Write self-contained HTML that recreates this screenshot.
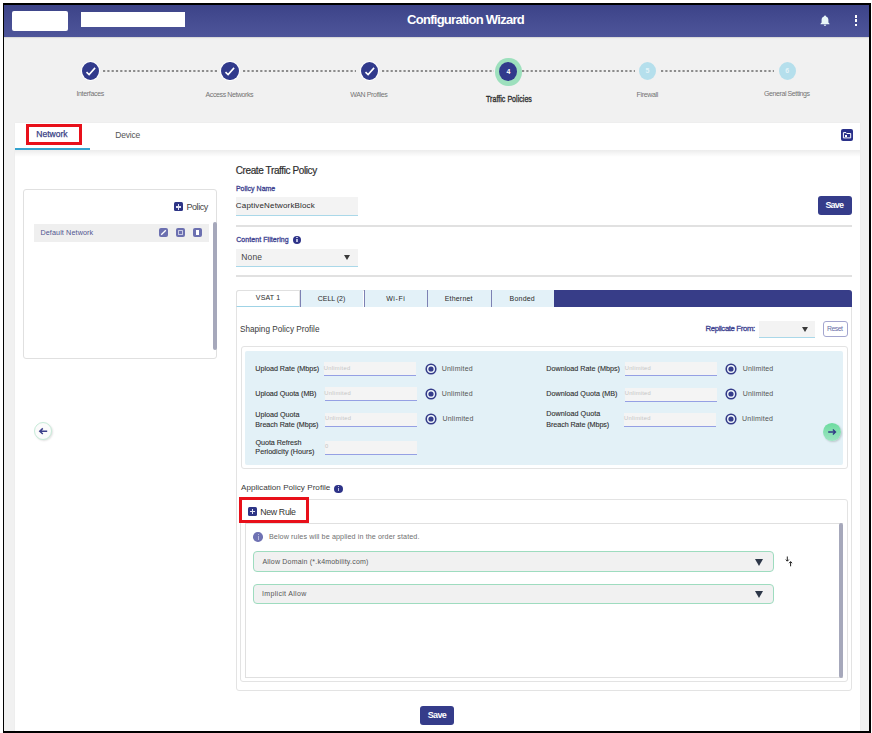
<!DOCTYPE html>
<html><head><meta charset="utf-8">
<style>
*{box-sizing:border-box;margin:0;padding:0}
html,body{width:872px;height:733px;overflow:hidden;background:#fff;font-family:"Liberation Sans",sans-serif}
#frame{position:absolute;left:3px;top:3px;width:868px;height:730px;border:2px solid #000;border-left-width:1px;background:#f1f1f1;overflow:hidden}
#pg{position:absolute;left:-4px;top:-5px;width:872px;height:733px}
.a{position:absolute}
.t{position:absolute;white-space:nowrap;line-height:1}
#hdr{position:absolute;left:0;top:0;width:872px;height:36.6px;background:linear-gradient(#3a4186,#4e559a);box-shadow:0 0.5px 1.5px rgba(0,0,0,.25)}
.wbox{position:absolute;background:#fff}
.step{position:absolute;width:17.5px;height:18.5px;border-radius:50%;background:#313a8c;box-shadow:0 0 0 1px #fff}
.dash{position:absolute;height:2px;top:70px;background:repeating-linear-gradient(90deg,#8c8c8c 0 2.3px,transparent 2.3px 4.3px)}
.sl{color:#747474}
.nv{color:#3d4290;-webkit-text-stroke:0.3px #3d4290}
.hr{position:absolute;height:2px;background:#e1e1e1}
.inp{position:absolute;background:#f3f3f3;border-bottom:1.8px solid #aad8e9}
.btn{position:absolute;background:#353c8a;border-radius:3px}
.info{position:absolute;width:8.4px;height:8.4px;border-radius:50%;background:#2e3388}
.info:before{content:"";position:absolute;left:3.65px;top:1.6px;width:1.1px;height:1.1px;background:#b9bce0}.info:after{content:"";position:absolute;left:3.65px;top:3.3px;width:1.1px;height:3.4px;background:#b9bce0}
.tab{position:absolute;top:289.5px;height:17.7px;background:#e3f1f8;border-left:1px solid #7d81b3}
.tt{color:#2a2a2a}
.lab{color:#2e2e2e;-webkit-text-stroke:0.1px #2e2e2e}
.sinp{position:absolute;width:92px;height:14px;background:#f4f4f4;border-bottom:1.3px solid #95a0e4}
.ph{color:#c4c4c4}
.radio{position:absolute;width:11.2px;height:11.2px;border-radius:50%;border:1.7px solid #353c8a;background:#eef6fa}
.radio:after{content:"";position:absolute;left:1.3px;top:1.3px;width:5.2px;height:5.2px;border-radius:50%;background:#353c8a}
.ul{color:#555}
.rule{position:absolute;left:253.2px;width:520.8px;background:#f1f1f1;border:1.4px solid #9edcbf;border-radius:4px}
.tri{position:absolute;width:0;height:0;border-left:4.1px solid transparent;border-right:4.1px solid transparent;border-top:7.3px solid #2d3748}
.tris{position:absolute;width:0;height:0;border-left:3.9px solid transparent;border-right:3.9px solid transparent;border-top:5.4px solid #3a3a3a}
.ico{position:absolute;width:9px;height:9px;border-radius:2px;background:#6c70b0}
</style></head>
<body>
<div id="frame"><div id="pg">
  <!-- HEADER -->
  <div id="hdr"></div>
  <div class="wbox" style="left:12px;top:10.6px;width:56px;height:20.2px;border-radius:2px"></div>
  <div class="wbox" style="left:81px;top:12px;width:104px;height:15.2px"></div>
  <div id="title" class="t" style="left:407.00px;top:12.86px;font-size:13.0px;letter-spacing:-0.713px;font-weight:bold;color:#fff">Configuration Wizard</div>
  <svg class="a" style="left:819.5px;top:15px" width="10" height="11" viewBox="0 0 10 11"><path d="M5 0.6c0.6 0 1 0.4 1 0.9 1.6 0.4 2.4 1.7 2.4 3.3v2.6l1.1 1.4v0.5H0.5V8.8l1.1-1.4V4.8c0-1.6 0.8-2.9 2.4-3.3 0-0.5 0.4-0.9 1-0.9zM3.8 9.7h2.4c0 0.7-0.5 1.2-1.2 1.2S3.8 10.4 3.8 9.7z" fill="#e8f6f8"/></svg>
  <div class="a" style="left:854.8px;top:15px;width:2.6px;height:2.5px;background:#fff"></div>
  <div class="a" style="left:854.8px;top:19.4px;width:2.6px;height:2.5px;background:#fff"></div>
  <div class="a" style="left:854.8px;top:23.9px;width:2.6px;height:2.5px;background:#fff"></div>

  <!-- STEPPER -->
  <svg class="a" style="left:103.0px;top:70px" width="114.0" height="2"><line x1="0" y1="1" x2="114.0" y2="1" stroke="#8c8c8c" stroke-width="2" stroke-dasharray="2.2 2.1"/></svg>
  <svg class="a" style="left:243.0px;top:70px" width="113.0" height="2"><line x1="0" y1="1" x2="113.0" y2="1" stroke="#8c8c8c" stroke-width="2" stroke-dasharray="2.2 2.1"/></svg>
  <svg class="a" style="left:382.0px;top:70px" width="112.0" height="2"><line x1="0" y1="1" x2="112.0" y2="1" stroke="#8c8c8c" stroke-width="2" stroke-dasharray="2.2 2.1"/></svg>
  <svg class="a" style="left:522.0px;top:70px" width="113.0" height="2"><line x1="0" y1="1" x2="113.0" y2="1" stroke="#8c8c8c" stroke-width="2" stroke-dasharray="2.2 2.1"/></svg>
  <svg class="a" style="left:661.0px;top:70px" width="113.0" height="2"><line x1="0" y1="1" x2="113.0" y2="1" stroke="#8c8c8c" stroke-width="2" stroke-dasharray="2.2 2.1"/></svg>
  <div class="step" style="left:81.5px;top:61.8px"></div>
  <div class="step" style="left:221.2px;top:61.8px"></div>
  <div class="step" style="left:360.5px;top:61.8px"></div>
  <svg class="a" style="left:81.5px;top:61.8px" width="18" height="19"><path d="M4.5 10.1l2.6 2.4 6-6.6" stroke="#fff" stroke-width="1.6" fill="none"/></svg>
  <svg class="a" style="left:221.2px;top:61.8px" width="18" height="19"><path d="M4.5 10.1l2.6 2.4 6-6.6" stroke="#fff" stroke-width="1.6" fill="none"/></svg>
  <svg class="a" style="left:360.5px;top:61.8px" width="18" height="19"><path d="M4.5 10.1l2.6 2.4 6-6.6" stroke="#fff" stroke-width="1.6" fill="none"/></svg>
  <div class="a" style="left:495.2px;top:57.6px;width:26.4px;height:28.4px;border-radius:50%;background:#9de0bd"></div>
  <div class="a" style="left:499.4px;top:62.3px;width:18px;height:19px;border-radius:50%;background:#313a8c;color:#fff;font-size:7px;font-weight:bold;text-align:center;line-height:19px">4</div>
  <div class="a" style="left:638.8px;top:61.8px;width:17.5px;height:18.5px;border-radius:50%;background:#b5dfec;color:#e4f3f8;font-size:7px;font-weight:bold;text-align:center;line-height:18.5px">5</div>
  <div class="a" style="left:778.5px;top:61.8px;width:17.5px;height:18.5px;border-radius:50%;background:#b5dfec;color:#e4f3f8;font-size:7px;font-weight:bold;text-align:center;line-height:18.5px">6</div>
  <div id="s1" class="t sl" style="left:76.44px;top:90.27px;font-size:7.0px;letter-spacing:-0.332px">Interfaces</div>
  <div id="s2" class="t sl" style="left:205.62px;top:90.99px;font-size:7.0px;letter-spacing:-0.406px">Access Networks</div>
  <div id="s3" class="t sl" style="left:350.14px;top:90.71px;font-size:7.0px;letter-spacing:-0.344px">WAN Profiles</div>
  <div id="s4" class="t" style="left:485.84px;top:94.94px;font-size:8.8px;letter-spacing:0.042px;color:#2e2e2e;-webkit-text-stroke:0.35px #2e2e2e;transform:scaleX(0.8);transform-origin:0 0">Traffic Policies</div>
  <div id="s5" class="t sl" style="left:636.57px;top:90.61px;font-size:7.0px;letter-spacing:-0.336px">Firewall</div>
  <div id="s6" class="t sl" style="left:763.94px;top:90.04px;font-size:7.0px;letter-spacing:-0.401px">General Settings</div>

  <!-- CARD -->
  <div class="a" style="left:14.6px;top:123.1px;width:845.9px;height:620px;background:#fff;box-shadow:0 0 1.5px rgba(0,0,0,.06)"></div>
  <div class="a" style="left:14.6px;top:150px;width:845.9px;height:7px;background:linear-gradient(rgba(0,0,0,.075),rgba(0,0,0,0))"></div>
  <div class="a" style="left:14.6px;top:148px;width:75.6px;height:2px;background:#34a3cf"></div>
  <div id="net" class="t" style="left:36.37px;top:130.39px;font-size:8.5px;letter-spacing:0.003px;color:#3a3f85;-webkit-text-stroke:0.25px #3a3f85">Network</div>
  <div class="a" style="left:26px;top:124px;width:55.8px;height:20.7px;border:3.1px solid #e8101a"></div>
  <div id="dev" class="t" style="left:115.27px;top:130.64px;font-size:8.5px;letter-spacing:-0.184px;color:#555">Device</div>
  <div class="a" style="left:841.2px;top:129.2px;width:11.7px;height:12.3px;border-radius:2px;background:#2a318a"></div>
  <svg class="a" style="left:841.2px;top:129.2px" width="12" height="13"><path d="M2.4 3.6h2.6l0.8 0.9h3.9v4.4H2.4z" fill="none" stroke="#fff" stroke-width="1"/><rect x="4" y="6" width="2" height="2" fill="#fff"/></svg>

  <!-- LEFT PANEL -->
  <div class="a" style="left:23px;top:189px;width:194px;height:170.4px;border:1px solid #e0e0e0;border-radius:3px"></div>
  <div class="a" style="left:173.8px;top:202.2px;width:9.1px;height:9.3px;border-radius:1.5px;background:#2e3586"></div>
  <div class="a" style="left:177.8px;top:204.4px;width:1.15px;height:5.2px;background:#e4e5f4"></div>
  <div class="a" style="left:175.8px;top:206.4px;width:5.2px;height:1.15px;background:#e4e5f4"></div>
  <div id="pol" class="t" style="left:186.55px;top:203.0px;font-size:9.0px;letter-spacing:-0.469px;color:#444">Policy</div>
  <div class="a" style="left:34px;top:223.6px;width:175px;height:18.3px;background:#efefef"></div>
  <div id="dn" class="t" style="left:40.40px;top:228.9px;font-size:7.2px;letter-spacing:0.118px;color:#50558f">Default Network</div>
  <div class="ico" style="left:158.7px;top:228.1px"></div>
  <svg class="a" style="left:158.7px;top:228.1px" width="9" height="9"><path d="M2.2 6.8L6.8 2.2" stroke="#fff" stroke-width="1.3"/></svg>
  <div class="ico" style="left:176.1px;top:228.1px"></div>
  <div class="a" style="left:178.4px;top:230.2px;width:4.4px;height:4.8px;border:1px solid #c9cbe4;border-radius:.5px"></div>
  <div class="ico" style="left:193.3px;top:228.1px"></div>
  <div class="a" style="left:196.1px;top:230.4px;width:3.4px;height:4.6px;background:#fff"></div>
  <div class="a" style="left:212.6px;top:222.2px;width:4.2px;height:127.5px;border-radius:2px;background:#a6a8bb"></div>

  <!-- left arrow -->
  <div class="a" style="left:33.6px;top:422.2px;width:18.3px;height:18.3px;border-radius:50%;background:#fbfbfb;border:1.2px solid #c7ecd9;box-shadow:1px 1px 2px rgba(0,0,0,.12)"></div>
  <svg class="a" style="left:33.6px;top:422.2px" width="19" height="19"><path d="M13.2 9.2H6.2M8.8 6.4L5.8 9.2l3 2.8" stroke="#3b3f8a" stroke-width="1.5" fill="none"/></svg>

  <!-- MAIN FORM -->
  <div id="ctp" class="t" style="left:235.78px;top:165.63px;font-size:10.0px;letter-spacing:-0.395px;color:#2e2e2e;-webkit-text-stroke:0.2px #2e2e2e">Create Traffic Policy</div>
  <div id="pn" class="t nv" style="left:235.89px;top:184.76px;font-size:7.0px;letter-spacing:0.010px">Policy Name</div>
  <div class="inp" style="left:236px;top:197.4px;width:122px;height:18.6px"></div>
  <div id="cnb" class="t" style="left:235.87px;top:202.15px;font-size:8.0px;letter-spacing:0.160px;color:#2a2a2a">CaptiveNetworkBlock</div>
  <div class="btn" style="left:817.8px;top:196px;width:34.2px;height:18.9px"></div>
  <div id="save1" class="t" style="left:825.39px;top:201.15px;font-size:9.0px;letter-spacing:-0.758px;color:#fff;font-weight:bold">Save</div>
  <div class="hr" style="left:236px;top:224.9px;width:616px"></div>
  <div id="cf" class="t nv" style="left:236.15px;top:236.30px;font-size:7.0px;letter-spacing:0.076px">Content Filtering</div>
  <div class="info" style="left:292.8px;top:235.7px"></div>
  <div class="inp" style="left:236.2px;top:248.5px;width:121.8px;height:18.4px"></div>
  <div id="none" class="t" style="left:241.29px;top:252.85px;font-size:8.5px;letter-spacing:0.128px;color:#444">None</div>
  <div class="tris" style="left:343.6px;top:255px"></div>
  <div class="hr" style="left:236px;top:275.2px;width:616px"></div>

  <!-- TAB CONTAINER -->
  <div class="a" style="left:236.4px;top:289.5px;width:615.3px;height:401.3px;border:1px solid #e3e3e3;border-radius:3px"></div>
  <div class="a" style="left:553.8px;top:289.8px;width:298px;height:17.3px;background:#373d88;border-radius:0 3px 0 0"></div>
  <div class="tab" style="left:300.2px;width:63.3px"></div>
  <div class="tab" style="left:363.5px;width:63.3px"></div>
  <div class="tab" style="left:426.8px;width:64px"></div>
  <div class="tab" style="left:490.8px;width:63px"></div>
  <div class="a" style="left:236.4px;top:289.5px;width:63.8px;height:17.8px;background:#fff;border:1px solid #e0e0e0;border-bottom:1.5px solid #9fd3e6;border-radius:3px 0 0 0"></div>
  <div id="vsat" class="t tt" style="left:255.80px;top:294.41px;font-size:7.0px;letter-spacing:0.165px">VSAT 1</div>
  <div id="cell" class="t tt" style="left:317.80px;top:294.57px;font-size:7.0px;letter-spacing:-0.042px">CELL (2)</div>
  <div id="wifi" class="t tt" style="left:386.16px;top:294.87px;font-size:7.0px;letter-spacing:0.580px">Wi-Fi</div>
  <div id="eth" class="t tt" style="left:444.71px;top:294.73px;font-size:7.0px;letter-spacing:0.191px">Ethernet</div>
  <div id="bond" class="t tt" style="left:509.57px;top:294.78px;font-size:7.0px;letter-spacing:0.211px">Bonded</div>

  <div id="spp" class="t" style="left:239.96px;top:326.28px;font-size:8.2px;letter-spacing:-0.008px;color:#3a3a3a">Shaping Policy Profile</div>
  <div id="rf" class="t nv" style="left:705.49px;top:324.62px;font-size:7.8px;letter-spacing:-0.379px">Replicate From:</div>
  <div class="inp" style="left:759.3px;top:320.7px;width:55.5px;height:17.3px"></div>
  <div class="tris" style="left:801.8px;top:326.8px"></div>
  <div class="a" style="left:822.5px;top:321.4px;width:25.4px;height:15.5px;border:1.2px solid #a4a6cf;border-radius:3px"></div>
  <div id="reset" class="t" style="left:827.09px;top:325.86px;font-size:6.9px;letter-spacing:-0.520px;color:#6a6fa8">Reset</div>

  <div class="a" style="left:240.7px;top:346.3px;width:606.9px;height:122.3px;border:1px solid #e3e3e3;border-radius:3px"></div>
  <div class="a" style="left:245.3px;top:350.9px;width:598.1px;height:114px;background:#e3f1f7;border-radius:2px"></div>

  <div id="l1" class="t lab" style="left:255.26px;top:364.53px;font-size:7.2px;letter-spacing:-0.026px">Upload Rate (Mbps)</div>
  <div id="l2" class="t lab" style="left:255.26px;top:390.21px;font-size:7.2px;letter-spacing:-0.044px">Upload Quota (MB)</div>
  <div id="l3" class="t lab" style="left:255.26px;top:410.76px;font-size:7.2px;letter-spacing:-0.010px">Upload Quota</div>
  <div id="l4" class="t lab" style="left:255.36px;top:420.85px;font-size:7.2px;letter-spacing:-0.068px">Breach Rate (Mbps)</div>
  <div id="l5" class="t lab" style="left:255.55px;top:438.91px;font-size:7.2px;letter-spacing:-0.066px">Quota Refresh</div>
  <div id="l6" class="t lab" style="left:255.36px;top:448.30px;font-size:7.2px;letter-spacing:-0.003px">Periodicity (Hours)</div>
  <div class="sinp" style="left:324px;top:362px"></div>
  <div class="sinp" style="left:324.5px;top:387.2px"></div>
  <div class="sinp" style="left:325px;top:412.8px"></div>
  <div class="sinp" style="left:325px;top:440.5px"></div>
  <div id="p1" class="t ph" style="left:323.69px;top:366.06px;font-size:5.8px;letter-spacing:0.283px">Unlimited</div>
  <div id="p2" class="t ph" style="left:324.27px;top:390.69px;font-size:5.8px;letter-spacing:0.285px">Unlimited</div>
  <div id="p3" class="t ph" style="left:324.96px;top:416.25px;font-size:5.8px;letter-spacing:0.239px">Unlimited</div>
  <div id="p4" class="t ph" style="left:324.90px;top:444.32px;font-size:5.8px;letter-spacing:0.066px">0</div>
  <svg class="a" style="left:424.80px;top:362.80px" width="12" height="12" viewBox="0 0 12 12"><circle cx="6" cy="6" r="4.8" fill="#f0f7fb" stroke="#353c8a" stroke-width="1.6"/><circle cx="6" cy="6" r="2.6" fill="#353c8a"/></svg>
  <svg class="a" style="left:425.00px;top:388.10px" width="12" height="12" viewBox="0 0 12 12"><circle cx="6" cy="6" r="4.8" fill="#f0f7fb" stroke="#353c8a" stroke-width="1.6"/><circle cx="6" cy="6" r="2.6" fill="#353c8a"/></svg>
  <svg class="a" style="left:425.40px;top:413.30px" width="12" height="12" viewBox="0 0 12 12"><circle cx="6" cy="6" r="4.8" fill="#f0f7fb" stroke="#353c8a" stroke-width="1.6"/><circle cx="6" cy="6" r="2.6" fill="#353c8a"/></svg>
  <div id="u1" class="t ul" style="left:441.69px;top:365.0px;font-size:7.0px;letter-spacing:0.228px">Unlimited</div>
  <div id="u2" class="t ul" style="left:441.64px;top:389.71px;font-size:7.0px;letter-spacing:0.228px">Unlimited</div>
  <div id="u3" class="t ul" style="left:442.48px;top:415.00px;font-size:7.0px;letter-spacing:0.212px">Unlimited</div>

  <div id="d1" class="t lab" style="left:546.27px;top:365.18px;font-size:7.2px;letter-spacing:0.013px">Download Rate (Mbps)</div>
  <div id="d2" class="t lab" style="left:546.27px;top:390.12px;font-size:7.2px;letter-spacing:0.007px">Download Quota (MB)</div>
  <div id="d3" class="t lab" style="left:546.29px;top:410.32px;font-size:7.2px;letter-spacing:0.034px">Download Quota</div>
  <div id="d4" class="t lab" style="left:546.27px;top:420.82px;font-size:7.2px;letter-spacing:-0.078px">Breach Rate (Mbps)</div>
  <div class="sinp" style="left:624.7px;top:362px"></div>
  <div class="sinp" style="left:624.7px;top:387.5px"></div>
  <div class="sinp" style="left:624.3px;top:412.8px"></div>
  <div id="p5" class="t ph" style="left:624.73px;top:365.59px;font-size:5.8px;letter-spacing:0.237px">Unlimited</div>
  <div id="p6" class="t ph" style="left:624.73px;top:391.33px;font-size:5.8px;letter-spacing:0.237px">Unlimited</div>
  <div id="p7" class="t ph" style="left:624.08px;top:416.29px;font-size:5.8px;letter-spacing:0.274px">Unlimited</div>
  <svg class="a" style="left:725.40px;top:362.80px" width="12" height="12" viewBox="0 0 12 12"><circle cx="6" cy="6" r="4.8" fill="#f0f7fb" stroke="#353c8a" stroke-width="1.6"/><circle cx="6" cy="6" r="2.6" fill="#353c8a"/></svg>
  <svg class="a" style="left:725.40px;top:388.10px" width="12" height="12" viewBox="0 0 12 12"><circle cx="6" cy="6" r="4.8" fill="#f0f7fb" stroke="#353c8a" stroke-width="1.6"/><circle cx="6" cy="6" r="2.6" fill="#353c8a"/></svg>
  <svg class="a" style="left:725.10px;top:413.30px" width="12" height="12" viewBox="0 0 12 12"><circle cx="6" cy="6" r="4.8" fill="#f0f7fb" stroke="#353c8a" stroke-width="1.6"/><circle cx="6" cy="6" r="2.6" fill="#353c8a"/></svg>
  <div id="u4" class="t ul" style="left:742.68px;top:365.1px;font-size:7.0px;letter-spacing:0.170px">Unlimited</div>
  <div id="u5" class="t ul" style="left:742.68px;top:389.66px;font-size:7.0px;letter-spacing:0.170px">Unlimited</div>
  <div id="u6" class="t ul" style="left:742.05px;top:414.91px;font-size:7.0px;letter-spacing:0.216px">Unlimited</div>

  <div class="a" style="left:822.9px;top:422.5px;width:18.1px;height:18px;border-radius:50%;background:linear-gradient(#6cdc9f,#9fe4c3);box-shadow:1px 1px 2px rgba(0,0,0,.18)"></div>
  <svg class="a" style="left:822.9px;top:422.5px" width="19" height="18"><path d="M5.2 9h7.4M9.9 6.5l2.6 2.5-2.6 2.5" stroke="#333a86" stroke-width="1.35" fill="none"/></svg>

  <!-- APPLICATION POLICY -->
  <div id="app" class="t" style="left:240.97px;top:483.57px;font-size:8.1px;letter-spacing:0.029px;color:#3a3a3a">Application Policy Profile</div>
  <div class="info" style="left:334.4px;top:484.5px"></div>
  <div class="a" style="left:240.3px;top:498.8px;width:607.3px;height:183.5px;border:1px solid #e3e3e3;border-radius:3px"></div>
  <div class="a" style="left:245.3px;top:523px;width:597.7px;height:154.9px;border:1px solid #e0e0e0;border-right:none"></div>
  <div class="a" style="left:838.8px;top:523px;width:4.2px;height:154.5px;border-radius:2px;background:#a6a8bb"></div>
  <div class="a" style="left:247.7px;top:506.8px;width:9.1px;height:9px;border-radius:1.5px;background:#2e3586"></div>
  <div class="a" style="left:251.7px;top:508.9px;width:1.15px;height:5.1px;background:#e4e5f4"></div>
  <div class="a" style="left:249.7px;top:510.9px;width:5.1px;height:1.15px;background:#e4e5f4"></div>
  <div id="nr" class="t" style="left:260.19px;top:507.61px;font-size:8.8px;letter-spacing:-0.341px;color:#333">New Rule</div>
  <div class="a" style="left:239.3px;top:497.1px;width:69.8px;height:25.5px;border:3.2px solid #e8101a"></div>

  <div class="a" style="left:253.4px;top:532.1px;width:9.5px;height:9.5px;border-radius:50%;background:#6f72b3"></div><div class="a" style="left:257.55px;top:534.2px;width:1.2px;height:1.2px;background:#b4b6dc"></div><div class="a" style="left:257.55px;top:536.1px;width:1.2px;height:3.6px;background:#b4b6dc"></div>
  <div id="below" class="t" style="left:268.94px;top:533.03px;font-size:7.2px;letter-spacing:0.091px;color:#707070">Below rules will be applied in the order stated.</div>
  <div class="rule" style="top:551px;height:20.6px"></div>
  <div id="ad" class="t" style="left:262.49px;top:557.72px;font-size:7.0px;letter-spacing:0.201px;color:#555">Allow Domain (*.k4mobility.com)</div>
  <div class="tri" style="left:755.3px;top:558.6px"></div>
  <div class="rule" style="top:584.3px;height:19.6px"></div>
  <div id="ia" class="t" style="left:262.06px;top:590.35px;font-size:7.0px;letter-spacing:0.314px;color:#555">Implicit Allow</div>
  <div class="tri" style="left:755.3px;top:591.2px"></div>
  <svg class="a" style="left:784px;top:555px" width="10" height="13"><path d="M3.3 1.5v4.5M1.8 4.6l1.5 1.6 1.5-1.6M6.6 11.3V6.8M5.1 8.2l1.5-1.6 1.5 1.6" stroke="#222" stroke-width="1" fill="none"/></svg>

  <div class="btn" style="left:420.3px;top:706px;width:33.8px;height:18.8px"></div>
  <div id="save2" class="t" style="left:427.74px;top:711.15px;font-size:9.0px;letter-spacing:-0.676px;color:#fff;font-weight:bold">Save</div>
</div></div>
</body></html>
